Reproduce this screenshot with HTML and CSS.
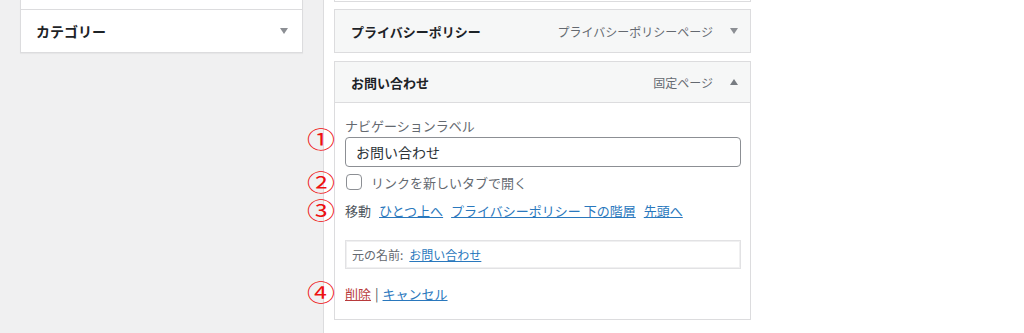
FILE: index.html
```html
<!DOCTYPE html>
<html lang="ja">
<head>
<meta charset="utf-8">
<link rel="stylesheet" href="styles.css">
</head>
<body>
<div class="left">
  <div class="lpanel">
    <div class="lprev"></div>
    <div class="lrow">
      <span class="ltitle">カテゴリー</span>
      <span class="tri down"></span>
    </div>
  </div>
</div>
<div class="right">
  <div class="stub"></div>
  <div class="item closed">
    <div class="ihead">
      <span class="ititle">プライバシーポリシー</span>
      <span class="itype">プライバシーポリシーページ</span>
      <span class="tri down"></span>
    </div>
  </div>
  <div class="item open">
    <div class="ihead">
      <span class="ititle">お問い合わせ</span>
      <span class="itype">固定ページ</span>
      <span class="tri up"></span>
    </div>
    <div class="ibody">
      <span class="num n1">①</span>
      <span class="num n2">②</span>
      <span class="num n3">③</span>
      <span class="num n4">④</span>
      <div class="label">ナビゲーションラベル</div>
      <div class="input">お問い合わせ</div>
      <div class="check"><span class="box"></span><span class="ctext">リンクを新しいタブで開く</span></div>
      <div class="move"><span class="mlabel">移動</span><a href="#">ひとつ上へ</a><a href="#">プライバシーポリシー 下の階層</a><a href="#">先頭へ</a></div>
      <div class="orig"><span class="olabel">元の名前:</span><a href="#">お問い合わせ</a></div>
      <div class="actions"><a href="#" class="del">削除</a><span class="sep">|</span><a href="#">キャンセル</a></div>
    </div>
  </div>
</div>
</body>
</html>
```
FILE: styles.css
```css
* { box-sizing: border-box; }
html, body { margin: 0; padding: 0; }
body {
  display: flex;
  width: 1024px;
  height: 333px;
  overflow: hidden;
  background: #fff;
  font-family: "Noto Sans CJK JP", "Noto Sans", sans-serif;
  color: #1d2327;
}
.left {
  width: 324px;
  flex: none;
  background: #f0f0f1;
  border-right: 1px solid #dcdcde;
  padding-left: 20px;
}
.lpanel {
  width: 283px;
  background: #fff;
  border: 1px solid #dcdcde;
  border-top: none;
  box-shadow: 0 1px 1px rgba(0,0,0,0.04);
}
.lprev { height: 10px; border-bottom: 1px solid #dcdcde; }
.lrow {
  height: 42px;
  display: flex;
  align-items: center;
  justify-content: space-between;
  padding: 0 14px 0 15px;
}
.ltitle { font-size: 14px; font-weight: 700; }
.tri { width: 0; height: 0; border-left: 4px solid transparent; border-right: 4px solid transparent; }
.tri.down { border-top: 6px solid #8c8f94; }
.tri.up { border-bottom: 6px solid #787c82; }
.right { flex: 1; padding-left: 10px; }
.stub {
  width: 417px;
  height: 2px;
  border: 1px solid #dcdcde;
  border-top: none;
}
.item { width: 417px; }
.closed { margin-top: 7px; }
.open { margin-top: 8px; }
.ihead {
  display: flex;
  align-items: center;
  background: #f6f7f7;
  border: 1px solid #dcdcde;
  padding: 0 12px 0 16px;
}
.closed .ihead { height: 44px; }
.open .ihead { height: 42px; }
.ititle { font-size: 13px; font-weight: 700; flex: 1; }
.itype { font-size: 12px; color: #646970; margin-right: 17px; }
.ibody {
  position: relative;
  border: 1px solid #dcdcde;
  border-top: none;
  padding: 14px 9px 16px 10px;
  font-size: 13px;
  color: #50575e;
}
.label { font-size: 13px; line-height: 18px; color: #646970; }
.input {
  margin-top: 2px;
  height: 30px;
  border: 1px solid #8c8f94;
  border-radius: 4px;
  padding: 0 10px;
  font-size: 14px;
  line-height: 28px;
  color: #2c3338;
}
.check { margin-top: 7px; height: 16px; display: flex; align-items: center; }
.box {
  width: 16px; height: 16px;
  border: 1px solid #8c8f94;
  border-radius: 4px;
  margin-right: 9px;
  margin-left: 1px;
}
.ctext { font-size: 13px; color: #646970; }
.move { margin-top: 12px; height: 18px; display: flex; align-items: center; gap: 8px; line-height: 18px; }
.mlabel { color: #50575e; }
a { color: #2a78bd; text-decoration: underline; }
.orig {
  margin-top: 20px;
  height: 29px;
  border: 1px solid #e2e2e4;
  box-shadow: inset 0 0 0 1px #f0f0f1;
  padding: 0 6px;
  display: flex;
  align-items: center;
  font-size: 12px;
  gap: 6px;
}
.olabel { color: #646970; }
.actions { margin-top: 16px; height: 18px; line-height: 18px; display: flex; align-items: center; }
.del { color: #b83a3b; }
.sep { margin: 0 4px; color: #50575e; }
.num {
  position: absolute;
  left: -28px;
  width: 26px;
  height: 22px;
  line-height: 22px;
  text-align: center;
  font-size: 28px;
  color: #ee1111;
  transform: scaleY(0.82);
}
.n1 { top: 24px; }
.n2 { top: 67px; }
.n3 { top: 95px; }
.n4 { top: 177px; }
```
